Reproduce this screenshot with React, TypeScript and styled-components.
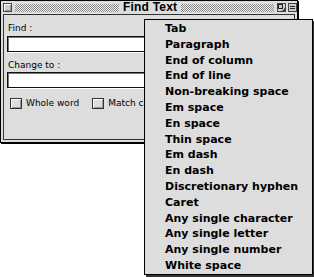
import { FC } from 'react';
import styled, { createGlobalStyle } from 'styled-components';

const Global = createGlobalStyle`
  html, body { margin: 0; padding: 0; background: #fff; }
  * { box-sizing: border-box; }
`;

const Page = styled.div`
  position: relative;
  width: 314px;
  height: 277px;
  overflow: hidden;
  background: #fff;
`;

const Window = styled.div`
  width: 298px;
  height: 143px;
  display: flex;
  flex-direction: column;
  border: 1px solid #000;
  background: #ddd;
  box-shadow: 1px 1px 0 #000;
`;

const TitleBar = styled.div`
  height: 13px;
  flex: none;
  display: flex;
  align-items: center;
  padding: 0 0 0 2px;
`;

const Box = styled.div`
  width: 9px;
  height: 9px;
  flex: none;
  border: 1px solid #444;
  background: #ccc;
  box-shadow: inset 1px 1px 0 #fff, inset -1px -1px 0 #999;
`;

const Stripes = styled.div<{ $width?: number }>`
  flex: ${(p) => (p.$width ? `none` : `1`)};
  width: ${(p) => (p.$width ? `${p.$width}px` : `auto`)};
  height: 8px;
  margin: 0 3px;
  background: repeating-conic-gradient(#8a8a8a 0% 25%, #eee 0% 50%) 0 0 / 2px 2px;
`;

const Title = styled.div`
  font-family: "Liberation Sans", Arial, sans-serif;
  font-weight: bold;
  font-size: 12px;
  line-height: 13px;
  letter-spacing: 0.2px;
  color: #000;
  padding: 0 1px;
`;

const Panel = styled.div`
  flex: 1;
  margin: 0 2px 2px;
  border: 1px solid #333;
  padding: 8px 6px 0 3px;
  display: flex;
  flex-direction: column;
`;

const Label = styled.div<{ $gap: number }>`
  margin-top: ${(p) => p.$gap}px;
  padding-left: 1px;
  font-family: "DejaVu Sans", Verdana, sans-serif;
  font-size: 9px;
  line-height: 11px;
  color: #000;
`;

const Field = styled.div<{ $gap: number }>`
  margin-top: ${(p) => p.$gap}px;
  height: 16px;
  border: 1px solid #111;
  background: #fff;
  box-shadow: inset 1px 1px 0 #777, 1px 1px 0 #fff;
`;

const Options = styled.div`
  margin-top: 10px;
  padding-left: 3px;
  display: flex;
  align-items: center;
`;

const Check = styled.div`
  width: 12px;
  height: 11px;
  flex: none;
  border: 1px solid #333;
  background: #ddd;
  box-shadow: inset 1px 1px 0 #fff, inset -1px -1px 0 #999;
`;

const CheckText = styled.span`
  margin: 0 13px 0 4px;
  font-family: "DejaVu Sans", Verdana, sans-serif;
  font-size: 9px;
  line-height: 11px;
  white-space: nowrap;
  color: #000;
`;

const Menu = styled.div`
  position: absolute;
  left: 144px;
  top: 19px;
  width: 169px;
  padding: 1px 0 0;
  border: 1px solid #000;
  background: #ddd;
  box-shadow: 2px 2px 0 #333;
`;

const Item = styled.div`
  height: 15.8px;
  line-height: 15.8px;
  padding-left: 20px;
  font-family: "DejaVu Sans", Verdana, sans-serif;
  font-weight: bold;
  font-size: 11px;
  color: #000;
  white-space: nowrap;
`;

const items = [
  'Tab',
  'Paragraph',
  'End of column',
  'End of line',
  'Non-breaking space',
  'Em space',
  'En space',
  'Thin space',
  'Em dash',
  'En dash',
  'Discretionary hyphen',
  'Caret',
  'Any single character',
  'Any single letter',
  'Any single number',
  'White space',
];

const ZoomIcon: FC = () => (
  <svg width="9" height="9" viewBox="0 0 9 9" style={{ flex: 'none' }}>
    <rect x="0.5" y="0.5" width="8" height="8" fill="#ccc" stroke="#444" />
    <path d="M1.5 7.5V1.5H7.5" stroke="#fff" fill="none" />
    <rect x="1.5" y="1.5" width="4" height="4" fill="none" stroke="#222" />
    <path d="M5.5 7.5H7.5V5.5" stroke="#222" fill="none" />
  </svg>
);

const CollapseIcon: FC = () => (
  <svg width="9" height="9" viewBox="0 0 9 9" style={{ flex: 'none', marginLeft: 2 }}>
    <rect x="0.5" y="0.5" width="8" height="8" fill="#ccc" stroke="#444" />
    <path d="M2 3.5H7M2 5.5H7" stroke="#222" />
  </svg>
);

export default function App() {
  return (
    <Page>
      <Global />
      <Window>
        <TitleBar>
          <Box />
          <Stripes $width={104} />
          <Title>Find Text</Title>
          <Stripes />
          <ZoomIcon />
          <CollapseIcon />
        </TitleBar>
        <Panel>
          <Label $gap={0}>Find :</Label>
          <Field $gap={2} />
          <Label $gap={8}>Change to :</Label>
          <Field $gap={1} />
          <Options>
            <Check />
            <CheckText>Whole word</CheckText>
            <Check />
            <CheckText>Match case</CheckText>
          </Options>
        </Panel>
      </Window>
      <Menu>
        {items.map((label) => (
          <Item key={label}>{label}</Item>
        ))}
      </Menu>
    </Page>
  );
}
